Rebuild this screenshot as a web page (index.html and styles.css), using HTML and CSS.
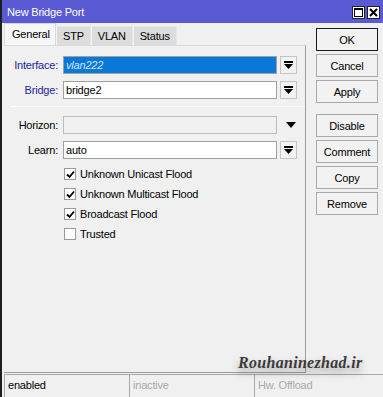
FILE: index.html
```html
<!DOCTYPE html>
<html lang="en">
<head>
  <meta charset="UTF-8">
  <title>New Bridge Port</title>
  <link rel="stylesheet" href="styles.css">
</head>
<body>

  <div class="window">
    <div class="titlebar">
      <span class="titlebar__text">New Bridge Port</span>
      <span class="titlebar__btn">
        <svg width="9" height="9" viewBox="0 0 9 9"><rect x="0.5" y="0.5" width="8" height="8" fill="none" stroke="#000"/><rect x="0" y="0" width="9" height="2" fill="#000"/></svg>
      </span>
      <span class="titlebar__btn">
        <svg width="9" height="9" viewBox="0 0 9 9"><path d="M1 1 L8 8 M8 1 L1 8" stroke="#000" stroke-width="2"/></svg>
      </span>
    </div>

    <div class="content">
      <div class="main">
        <div class="tabs">
          <div class="tab tab--active">General</div>
          <div class="tab">STP</div>
          <div class="tab">VLAN</div>
          <div class="tab">Status</div>
        </div>

        <div class="panel">
          <div class="row">
            <div class="row__label row__label--blue">Interface:</div>
            <div class="field field--selected">vlan222</div>
            <div class="drop">
              <svg width="9" height="8" viewBox="0 0 9 8"><rect x="0" y="0" width="9" height="2" fill="#000"/><polygon points="0,3 9,3 4.5,8" fill="#000"/></svg>
            </div>
          </div>
          <div class="row">
            <div class="row__label row__label--blue">Bridge:</div>
            <div class="field">bridge2</div>
            <div class="drop">
              <svg width="9" height="8" viewBox="0 0 9 8"><rect x="0" y="0" width="9" height="2" fill="#000"/><polygon points="0,3 9,3 4.5,8" fill="#000"/></svg>
            </div>
          </div>

          <div class="separator"></div>

          <div class="row">
            <div class="row__label">Horizon:</div>
            <div class="field field--disabled"></div>
            <div class="drop drop--plain">
              <svg width="10" height="6" viewBox="0 0 10 6"><polygon points="0,0 10,0 5,6" fill="#000"/></svg>
            </div>
          </div>
          <div class="row">
            <div class="row__label">Learn:</div>
            <div class="field">auto</div>
            <div class="drop">
              <svg width="9" height="8" viewBox="0 0 9 8"><rect x="0" y="0" width="9" height="2" fill="#000"/><polygon points="0,3 9,3 4.5,8" fill="#000"/></svg>
            </div>
          </div>

          <div class="checks">
            <div class="check">
              <span class="check__box"><svg width="9" height="9" viewBox="0 0 9 9"><path d="M1 4.5 L3.5 7 L8 1.5" fill="none" stroke="#000" stroke-width="1.8"/></svg></span>
              Unknown Unicast Flood
            </div>
            <div class="check">
              <span class="check__box"><svg width="9" height="9" viewBox="0 0 9 9"><path d="M1 4.5 L3.5 7 L8 1.5" fill="none" stroke="#000" stroke-width="1.8"/></svg></span>
              Unknown Multicast Flood
            </div>
            <div class="check">
              <span class="check__box"><svg width="9" height="9" viewBox="0 0 9 9"><path d="M1 4.5 L3.5 7 L8 1.5" fill="none" stroke="#000" stroke-width="1.8"/></svg></span>
              Broadcast Flood
            </div>
            <div class="check">
              <span class="check__box"></span>
              Trusted
            </div>
          </div>
        </div>
      </div>

      <div class="buttons">
        <div class="btn btn--default">OK</div>
        <div class="btn">Cancel</div>
        <div class="btn">Apply</div>
        <div class="btn btn--gap">Disable</div>
        <div class="btn">Comment</div>
        <div class="btn">Copy</div>
        <div class="btn">Remove</div>
      </div>
    </div>

    <div class="statusbar">
      <div class="statusbar__cell">enabled</div>
      <div class="statusbar__cell statusbar__cell--dim">inactive</div>
      <div class="statusbar__cell statusbar__cell--dim statusbar__cell--last">Hw. Offload</div>
    </div>

    <div class="watermark">Rouhaninezhad.ir</div>
  </div>

</body>
</html>
```

FILE: styles.css
```css
:root {
  --clr-title: #5a5ad4;
  --clr-bg: #f0f0f0;
  --clr-border: #a8a8a8;
  --clr-label-blue: #23239c;
  --clr-select: #0a78d7;
}

* {
  box-sizing: border-box;
}

html,
body {
  margin: 0;
  padding: 0;
  height: 100%;
}

body {
  background: var(--clr-bg);
  font-family: "Liberation Sans", Arial, sans-serif;
  font-size: 11px;
  letter-spacing: -0.2px;
  color: #000;
}

.window {
  position: relative;
  width: 383px;
  height: 397px;
  display: flex;
  flex-direction: column;
  border-left: 2px solid #1e1e1e;
  overflow: hidden;
}

/* title bar */
.titlebar {
  height: 23px;
  flex: 0 0 23px;
  background: var(--clr-title);
  display: flex;
  align-items: center;
  padding: 1px 3px 0 5px;
  gap: 2px;
}

.titlebar__text {
  flex: 1 1 auto;
  color: #fff;
  font-size: 11px;
}

.titlebar__btn {
  width: 13px;
  height: 13px;
  background: #fff;
  border: 1px solid #222;
  display: flex;
  align-items: center;
  justify-content: center;
}

/* content */
.content {
  flex: 1 1 auto;
  display: flex;
}

.main {
  width: 304px;
  display: flex;
  flex-direction: column;
  padding-left: 2px;
}

.tabs {
  display: flex;
  height: 22px;
  align-items: flex-end;
}

.tab {
  height: 19px;
  padding: 0 6px;
  display: flex;
  align-items: center;
  background: #dcdcdc;
  border: 1px solid #e8e8e8;
  border-bottom: none;
  border-left-color: #f4f4f4;
}

.tab--active {
  height: 22px;
  width: 52px;
  padding: 0 7px 2px;
  background: #f7f7f7;
  border: 1px solid #d8d8d8;
  border-bottom: none;
}

.panel {
  flex: 1 1 auto;
  border-top: 1px solid #dadada;
  border-right: 1px solid #9c9c9c;
  border-bottom: 1px solid #9c9c9c;
  padding-top: 10px;
}

.row {
  display: flex;
  align-items: center;
  height: 18px;
  margin-bottom: 7px;
}

.row__label {
  width: 54px;
  text-align: right;
  margin-right: 5px;
}

.row__label--blue {
  color: var(--clr-label-blue);
}

.field {
  width: 214px;
  height: 18px;
  background: #fff;
  border: 1px solid #a0a0a0;
  padding: 0 2px;
  line-height: 16px;
}

.field--selected {
  background: var(--clr-select);
  color: #d4e5f8;
  font-style: italic;
}

.field--disabled {
  background: var(--clr-bg);
  border-color: #bcbcbc;
}

.drop {
  width: 17px;
  height: 18px;
  margin-left: 3px;
  background: #f2f2f2;
  border: 1px solid #c4c4c4;
  display: flex;
  align-items: center;
  justify-content: center;
}

.drop--plain {
  background: none;
  border: none;
  margin-left: 5px;
}

.separator {
  height: 1px;
  background: #fff;
  margin: 1px 0 9px 6px;
}

.checks {
  display: flex;
  flex-direction: column;
  padding-left: 60px;
  margin-top: -2px;
}

.check {
  height: 20px;
  display: flex;
  align-items: center;
  gap: 4px;
}

.check__box {
  width: 12px;
  height: 12px;
  background: #fff;
  border: 1px solid #9a9a9a;
  display: flex;
  align-items: center;
  justify-content: center;
}

/* right column */
.buttons {
  display: flex;
  flex-direction: column;
  gap: 3px;
  padding: 5px 0 0 10px;
}

.btn {
  width: 62px;
  height: 23px;
  background: #f2f2f2;
  border: 1px solid #a9a9a9;
  display: flex;
  align-items: center;
  justify-content: center;
}

.btn--default {
  border-color: #1a1a1a;
}

.btn--gap {
  margin-top: 8px;
}

/* status bar */
.statusbar {
  flex: 0 0 23px;
  display: flex;
  margin-top: 1px;
  padding-left: 2px;
}

.statusbar__cell {
  width: 125px;
  border-top: 1px solid #a8a8a8;
  border-left: 1px solid #a8a8a8;
  padding: 4px 3px 0;
}

.statusbar__cell--dim {
  color: #a8a8a8;
}

.statusbar__cell--last {
  flex: 1 1 auto;
}

.watermark {
  position: absolute;
  left: 236px;
  top: 354px;
  font-family: "Liberation Serif", serif;
  font-style: italic;
  font-weight: bold;
  font-size: 16px;
  letter-spacing: 0.3px;
  color: #3a3a3a;
  text-shadow: 0 5px 8px rgba(0, 0, 0, 0.35);
}
```
